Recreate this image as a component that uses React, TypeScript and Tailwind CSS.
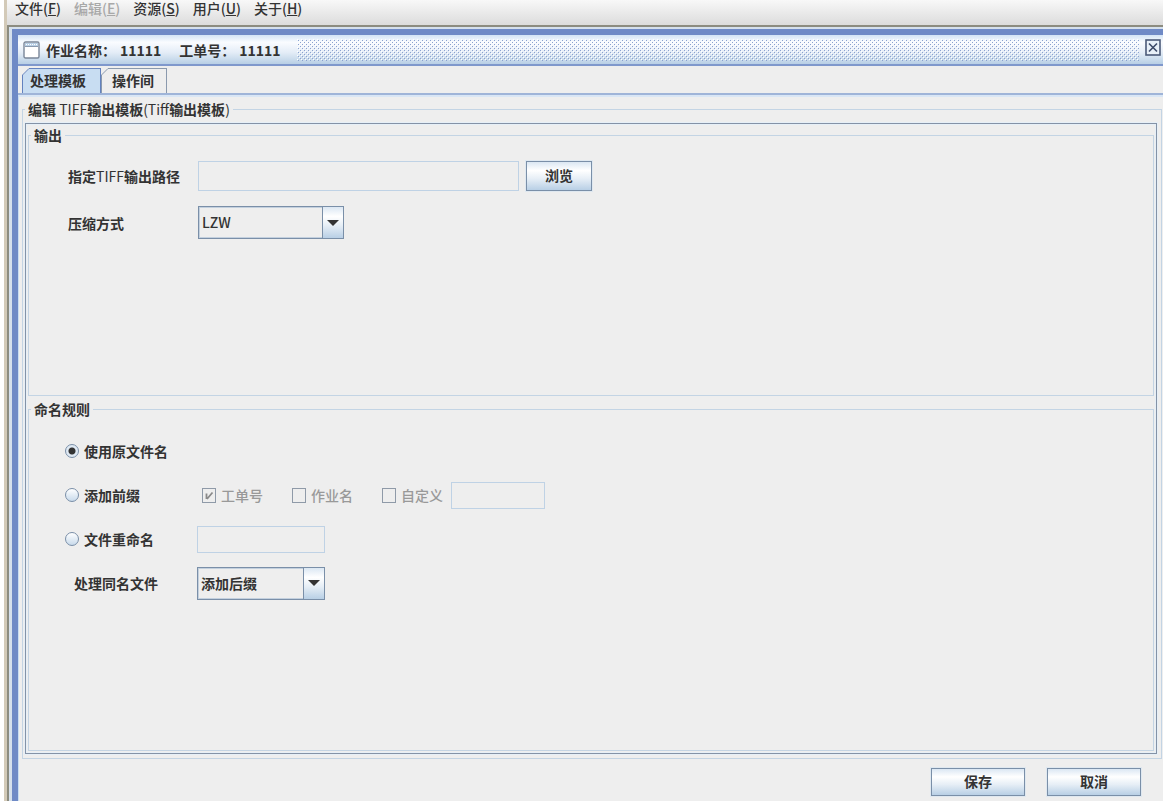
import React, { useState } from 'react';

const MENUS = [
  { label: '文件', key: 'F' },
  { label: '编辑', key: 'E', disabled: true },
  { label: '资源', key: 'S' },
  { label: '用户', key: 'U' },
  { label: '关于', key: 'H' },
];

const TABS = ['处理模板', '操作间'];

const METAL = 'bg-[linear-gradient(to_bottom,#dbe7f3_0%,#ffffff_30%,#e6eef6_60%,#b8cfe5_100%)]';

const MenuBar = () => (
  <nav className="flex h-[25px] items-start gap-[13px] bg-linear-to-b from-[#f8f8f8] to-[#dcdcdc] pl-2 font-medium">
    {MENUS.map((menu) => (
      <button
        key={menu.key}
        disabled={menu.disabled}
        className="leading-4 disabled:text-[#a8a8a8]"
      >
        {menu.label}(<span className="underline">{menu.key}</span>)
      </button>
    ))}
  </nav>
);

const TitleBar = () => (
  <header className="flex h-[31px] items-center border-b-2 border-[#7f98cc] bg-[linear-gradient(to_bottom,#d3e4f5_0%,#fafcff_25%,#e4edf7_60%,#b8cfe5_100%)] pl-[5px] pr-[2px]">
    <svg width="17" height="18" viewBox="0 0 17 18" className="shrink-0">
      <rect x="1" y="1" width="15" height="16" rx="1.5" fill="#ffffff" stroke="#7a8799" strokeWidth="1.4" />
      <rect x="2" y="2" width="13" height="3" fill="#b8cfe5" />
      <path d="M2 5.5h13" stroke="#8a99ad" />
      <path d="M3 3.5h11" stroke="#ffffff" strokeDasharray="1 1" />
    </svg>
    <h1 className="ml-[6px] flex shrink-0 gap-[18px] leading-4">
      <span className="flex gap-1">
        <span>作业名称：</span>
        <span>11111</span>
      </span>
      <span className="flex gap-1">
        <span>工单号：</span>
        <span>11111</span>
      </span>
    </h1>
    <svg height="22" className="ml-4 min-w-0 flex-1">
      <defs>
        <pattern id="bumps" width="4" height="4" patternUnits="userSpaceOnUse">
          <path d="M0 0h1v1h-1zM2 2h1v1h-1z" fill="#ffffff" />
          <path d="M1 1h1v1h-1zM3 3h1v1h-1z" fill="#8ba2cf" />
        </pattern>
      </defs>
      <rect width="100%" height="22" fill="url(#bumps)" />
    </svg>
    <button aria-label="关闭" className="mb-1 ml-[6px] shrink-0">
      <svg width="16" height="17" viewBox="0 0 16 17">
        <rect x="1" y="1" width="14" height="15" fill="#e8f0f8" stroke="#4b5a78" strokeWidth="1.6" />
        <path d="M4 4.5l8 8M12 4.5l-8 8" stroke="#3c4a68" strokeWidth="1.6" />
      </svg>
    </button>
  </header>
);

const TabBar = ({ active, onSelect }: { active: number; onSelect: (i: number) => void }) => (
  <div role="tablist" className="flex h-[29px] items-end border-b-2 border-[#9fb4d8] pl-1">
    {TABS.map((tab, i) => (
      <button
        key={tab}
        role="tab"
        aria-selected={i === active}
        onClick={() => onSelect(i)}
        className={`relative h-[25px] border border-b-0 pb-[2px] leading-4 ${
          i === active
            ? 'border-[#6382bf] bg-[#c8ddf2] pl-[7px] pr-[14px]'
            : 'border-[#8a99ad] bg-[#eeeeee] pl-[10px] pr-3'
        }`}
      >
        <svg width="8" height="8" viewBox="0 0 8 8" className="absolute -left-px -top-px">
          <path d="M0 0h8L0 8z" fill="#eeeeee" />
          <path d="M0.5 8v-1L7 0.5h1" fill="none" stroke={i === active ? '#6382bf' : '#8a99ad'} />
        </svg>
        {tab}
      </button>
    ))}
  </div>
);

type GroupProps = { title: React.ReactNode; className?: string; children: React.ReactNode };

const Group = ({ title, className = '', children }: GroupProps) => (
  <fieldset className={`min-w-0 border border-[#c3d4e4] ${className}`}>
    <legend className="ml-[2px] px-[3px] leading-4">{title}</legend>
    {children}
  </fieldset>
);

type SelectBoxProps = { id: string; options: string[]; className: string };

const SelectBox = ({ id, options, className }: SelectBoxProps) => (
  <div className={`relative ${className}`}>
    <select
      id={id}
      className="h-[33px] w-full appearance-none border border-[#7a8fa8] bg-[#eeeeee] pl-[3px] pr-6 shadow-[inset_0_0_0_1px_#c3d0de] outline-none"
    >
      {options.map((option) => (
        <option key={option}>{option}</option>
      ))}
    </select>
    <span
      className={`pointer-events-none absolute inset-y-0 right-0 flex w-[22px] items-center justify-center border border-[#7a8fa8] ${METAL}`}
    >
      <svg width="12" height="6" viewBox="0 0 12 6">
        <path d="M0 0h12L6 6z" fill="#333333" />
      </svg>
    </span>
  </div>
);

const TextBox = ({ className, ...rest }: React.InputHTMLAttributes<HTMLInputElement>) => (
  <input
    type="text"
    disabled
    className={`border border-[#bfd2e5] bg-[#eeeeee] px-1 ${className}`}
    {...rest}
  />
);

const MetalButton = ({ className, children }: { className: string; children: React.ReactNode }) => (
  <button className={`border border-[#7a8fa8] pb-[2px] leading-4 shadow-[0_0_0_1px_#dfe8f0] ${METAL} ${className}`}>
    {children}
  </button>
);

type RadioProps = { label: string; checked: boolean; onChange: () => void };

const Radio = ({ label, checked, onChange }: RadioProps) => (
  <label className="flex w-[132px] items-center gap-[5px] leading-4">
    <input
      type="radio"
      name="naming"
      checked={checked}
      onChange={onChange}
      className="size-[14px] appearance-none rounded-full border border-[#7a8fa8] bg-linear-to-b from-white to-[#c8daeb] checked:bg-[radial-gradient(circle,#333333_3px,#dfe9f3_4px)]"
    />
    {label}
  </label>
);

const PrefixCheck = ({ label, checked = false }: { label: string; checked?: boolean }) => (
  <label className="relative flex items-center gap-[5px] font-medium leading-4 text-[#999999]">
    <input
      type="checkbox"
      disabled
      defaultChecked={checked}
      className="h-[15px] w-[14px] appearance-none border border-[#8f9aa8]"
    />
    {checked && (
      <svg width="14" height="15" viewBox="0 0 14 15" className="absolute left-0">
        <path d="M4.5 5.5v5.5M5 11L10.5 4.5" fill="none" stroke="#8a8a8a" strokeWidth="1.8" />
      </svg>
    )}
    {label}
  </label>
);

const OutputGroup = () => (
  <Group title="输出" className="min-h-[269px]">
    <div className="flex flex-col gap-[15px] pl-[39px] pt-[18px]">
      <div className="flex items-center">
        <label htmlFor="path" className="w-[130px] leading-4">
          指定<span className="font-normal">TIFF</span>输出路径
        </label>
        <TextBox id="path" className="h-[30px] w-[321px]" />
        <MetalButton className="ml-[7px] h-[30px] w-[66px]">浏览</MetalButton>
      </div>
      <div className="flex items-center">
        <label htmlFor="compression" className="w-[130px] leading-4">
          压缩方式
        </label>
        <SelectBox id="compression" options={['LZW']} className="w-[146px] font-medium" />
      </div>
    </div>
  </Group>
);

const NamingGroup = () => {
  const [mode, setMode] = useState(0);

  return (
    <Group title="命名规则" className="flex-1">
      <div className="flex flex-col pl-[36px] pt-3">
        <div className="flex h-11 items-center">
          <Radio label="使用原文件名" checked={mode === 0} onChange={() => setMode(0)} />
        </div>
        <div className="flex h-11 items-center">
          <Radio label="添加前缀" checked={mode === 1} onChange={() => setMode(1)} />
          <div className="flex items-center gap-[29px] pl-[5px]">
            <PrefixCheck label="工单号" checked />
            <PrefixCheck label="作业名" />
            <PrefixCheck label="自定义" />
          </div>
          <TextBox aria-label="自定义" className="ml-2 h-[27px] w-[94px]" />
        </div>
        <div className="flex h-11 items-center">
          <Radio label="文件重命名" checked={mode === 2} onChange={() => setMode(2)} />
          <TextBox aria-label="文件重命名" className="h-[27px] w-[128px]" />
        </div>
        <div className="flex h-11 items-center">
          <label htmlFor="duplicate" className="w-[132px] pl-[9px] leading-4">
            处理同名文件
          </label>
          <SelectBox id="duplicate" options={['添加后缀']} className="w-[128px]" />
        </div>
      </div>
    </Group>
  );
};

const TemplateTitle = () => (
  <>
    编辑 <span className="font-normal">TIFF</span>输出模板<span className="font-normal">(Tiff</span>输出模板
    <span className="font-normal">)</span>
  </>
);

export default function App() {
  const [tab, setTab] = useState(0);

  return (
    <div className="flex min-h-screen bg-white pl-1 font-['Noto_Sans_CJK_SC',sans-serif] text-[14px] font-bold text-[#333333]">
      <div className="w-[3px] bg-[#d3cab8]" />
      <div className="flex min-w-0 flex-1 flex-col bg-[#eeeeee]">
        <MenuBar />
        <div className="flex flex-1 border-l-2 border-t-2 border-[#8c8c80] bg-[#d5e0ec] pl-[3px] pt-[2px]">
          <main className="flex min-w-0 flex-1 flex-col border-l-[6px] border-t-[6px] border-[#6f8ac6] bg-[#eeeeee]">
            <TitleBar />
            <TabBar active={tab} onSelect={setTab} />
            <div className="flex flex-1 flex-col border-l border-t-2 border-l-[#c8ddf2] border-t-[#d9e6f5] pl-[3px] pr-px pt-1">
              <Group title={<TemplateTitle />} className="flex flex-1 flex-col pb-[4px]">
                <div className="ml-[2px] mr-1 mt-[6px] flex flex-1 flex-col gap-[5px] border border-[#8492a6] p-[2px] pt-[3px] shadow-[inset_0_0_0_1px_#e6eff7,0_0_0_1px_#e6eff7]">
                  <OutputGroup />
                  <NamingGroup />
                </div>
              </Group>
              <footer className="flex justify-end gap-[22px] pb-[5px] pr-[21px] pt-[9px]">
                <MetalButton className="h-7 w-[94px]">保存</MetalButton>
                <MetalButton className="h-7 w-[94px]">取消</MetalButton>
              </footer>
            </div>
          </main>
        </div>
      </div>
    </div>
  );
}
